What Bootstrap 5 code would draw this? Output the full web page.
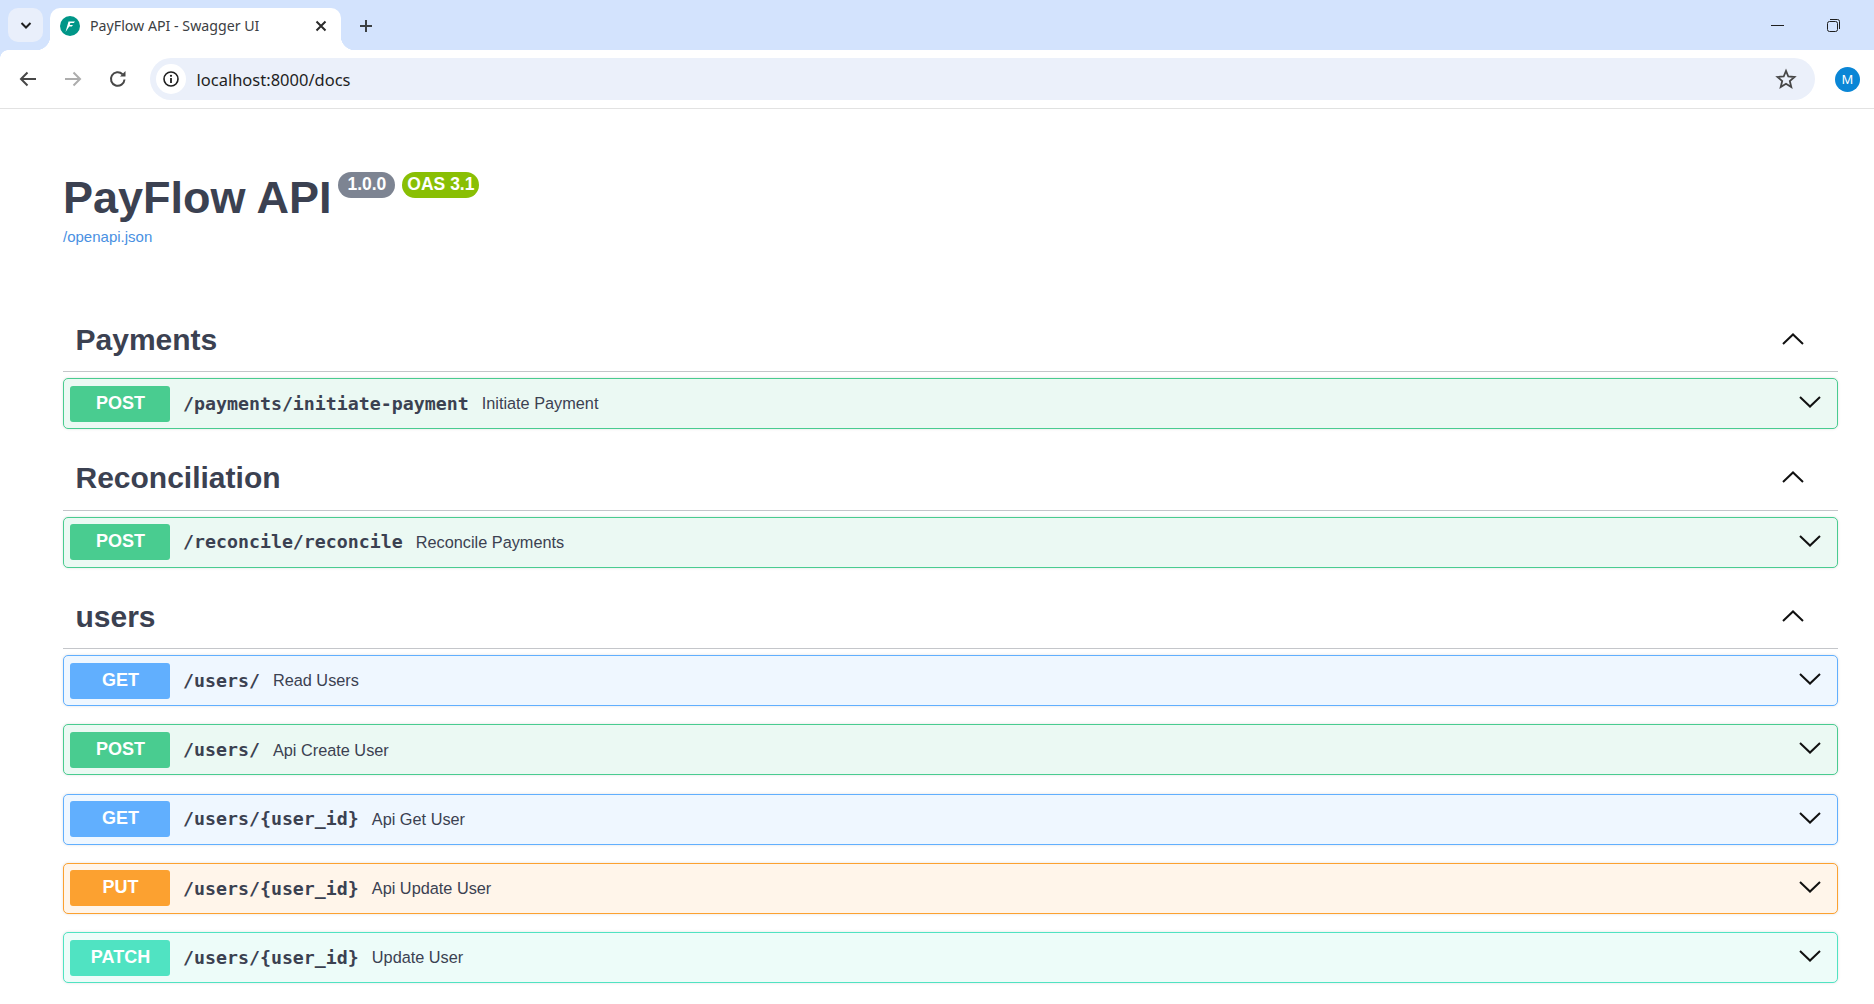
<!DOCTYPE html>
<html lang="en">
<head>
<meta charset="utf-8">
<title>PayFlow API - Swagger UI</title>
<link href="https://cdn.jsdelivr.net/npm/bootstrap@5.3.1/dist/css/bootstrap.min.css" rel="stylesheet">
<style>
    html, body { height: 100%; overflow: hidden; }
    body { background: #fff; font-family: "Liberation Sans", Arial, sans-serif; color: #3b4151; }

    /* browser chrome */
    .tab-strip { height: 50px; background: #d3e3fd; padding: 8px 0 0 8px; }
    .tab-toggle { width: 35px; height: 34px; background: #e9effb; border-radius: 10px; margin-right: 7px; }
    .tab-page { width: 291px; height: 42px; background: #fff; border-radius: 10px 10px 0 0; padding: 0 14px 7px 10px; position: relative; font: 14.2px "Noto Sans", sans-serif; color: #3c4043; }
    .tab-page::before, .tab-page::after { content: ""; position: absolute; bottom: 0; width: 14px; height: 14px; }
    .tab-page::before { left: -14px; background: radial-gradient(circle at 0 0, transparent 14px, #fff 14.5px); }
    .tab-page::after { right: -14px; background: radial-gradient(circle at 100% 0, transparent 14px, #fff 14.5px); }
    .fav-circle { width: 20px; height: 20px; flex: none; margin-right: 10px; }
    .tab-add { margin-left: 13px; margin-top: 5px; }
    .win-btns { margin-left: auto; gap: 43px; padding: 0 34px 8px 0; }
    .bar-tools { height: 58px; background: #fff; position: relative; padding: 8px 14px 8px 16px; }
    .bar-tools::before { content: ""; position: absolute; top: 0; left: 0; width: 8px; height: 8px; background: radial-gradient(circle at 100% 100%, transparent 7.5px, #d3e3fd 8px); }
    .bar-line { height: 1px; background: #e2e2e2; }
    .nav-ico { width: 24px; height: 24px; flex: none; margin-right: 21px; }
    .omni { height: 42px; flex: 1; background: #ebf0fa; border-radius: 21px; padding: 0 18px 0 6px; margin: 0 20px 0 -1px; font: 16.500px "Noto Sans", sans-serif; color: #1f1f1f; }
    .omni-info { width: 30px; height: 30px; background: #fff; border-radius: 50%; margin-right: 10.5px; }
    .avatar { width: 25px; height: 25px; background: #0a86d6; color: #fff; border-radius: 50%; font: 13px "Noto Sans", sans-serif; }

    /* swagger page */
    .sw-page { padding: 0 36px 0 63px; }
    .sw-info { padding-top: 66px; height: 208px; }
    .sw-title { font-size: 45px; font-weight: 700; line-height: 1; color: #3b4151; margin: 0; }
    .sw-title-row { gap: 7px; }
    .sw-pill { height: 26px; border-radius: 13px; color: #fff; font-size: 17.5px; font-weight: 700; line-height: 25px; padding: 0 9px; margin-top: -3px; background: #7d8492; }
    .sw-pill-oas { background: #89bf04; padding: 0 5px; }
    .sw-link { font-size: 15px; color: #4990e2; text-decoration: none; display: block; margin-top: 6px; }
    .sw-tag { height: 55px; border-bottom: 1px solid rgba(59,65,81,.3); padding: 0 34px 9px 12.5px; margin-bottom: 6px; }
    .sw-tag h3 { font-size: 30px; font-weight: 700; margin: 0; color: #3b4151; line-height: 1; }
    .sw-tag svg { margin-bottom: 2px; }
    .sw-op { height: 51px; border: 1px solid; border-radius: 5px; padding: 0 16px 0 6px; margin-bottom: 18.3px; box-shadow: 0 0 3px rgba(0,0,0,.12); }
    .sw-group { margin-bottom: 26.5px; }
    .sw-group .sw-op:last-child { margin-bottom: 0; }
    .sw-method { width: 100px; height: 36px; border-radius: 3px; color: #fff; font-size: 18px; font-weight: 700; margin-right: 13px; flex: none; padding: 0 0 1px 1px; }
    .sw-path { font-family: "DejaVu Sans Mono", monospace; font-size: 18.25px; font-weight: 700; color: #3b4151; margin-right: 13px; }
    .sw-desc { font-size: 16.3px; color: #3b4151; }
    .sw-chev { margin-left: auto; margin-bottom: 3px; flex: none; }
    .op-post { background: #ebf9f3; border-color: #49cc90; }
    .op-post .sw-method { background: #49cc90; }
    .op-get { background: #eff7ff; border-color: #61affe; }
    .op-get .sw-method { background: #61affe; }
    .op-put { background: #fff5ea; border-color: #fca130; }
    .op-put .sw-method { background: #fca130; }
    .op-patch { background: #edfcf9; border-color: #50e3c2; }
    .op-patch .sw-method { background: #50e3c2; }
</style>
</head>
<body>
    <div class="tab-strip d-flex align-items-start">
        <div class="tab-toggle d-flex align-items-center justify-content-center">
            <svg width="14" height="14" viewBox="0 0 14 14"><path d="M2.500 5 7 9.500 11.500 5" fill="none" stroke="#1f1f1f" stroke-width="2"/></svg>
        </div>
        <div class="tab-page d-flex align-items-center">
            <svg class="fav-circle" viewBox="0 0 20 20"><circle cx="10" cy="10" r="10" fill="#009688"/><path d="M5.500 16 8.500 5.500H15L13.800 7H10.300L9.800 9H13L11.800 10.500H9.300Z" fill="#fff"/></svg>
            <span>PayFlow API - Swagger UI</span>
            <svg class="ms-auto" width="12" height="12" viewBox="0 0 12 12"><path d="M1.500 1.500 10.500 10.500M10.500 1.500 1.500 10.500" stroke="#2b2b2b" stroke-width="2"/></svg>
        </div>
        <svg class="tab-add" width="24" height="26" viewBox="0 0 24 26"><path d="M12 7V19M6 13H18" stroke="#3c4043" stroke-width="2"/></svg>
        <div class="win-btns d-flex align-items-center h-100">
            <svg width="13" height="13" viewBox="0 0 13 13"><path d="M0 6.500H13" stroke="#1f1f1f" stroke-width="1"/></svg>
            <svg width="13" height="13" viewBox="0 0 13 13"><rect x=".5" y="2.500" width="10" height="10" rx="2" fill="none" stroke="#1f1f1f"/><path d="M3 .5H10.500A2 2 0 0 1 12.500 2.500V10" fill="none" stroke="#1f1f1f"/></svg>
        </div>
    </div>
    <div class="bar-tools d-flex align-items-center">
        <svg class="nav-ico" viewBox="0 0 24 24"><path d="M20 12H5M11.500 5.500 5 12l6.500 6.500" fill="none" stroke="#474747" stroke-width="2"/></svg>
        <svg class="nav-ico" viewBox="0 0 24 24"><path d="M4 12H19M12.500 5.500 19 12l-6.500 6.500" fill="none" stroke="#adadad" stroke-width="2"/></svg>
        <svg class="nav-ico" viewBox="0 0 24 24"><path d="M18.500 12.500A6.800 6.800 0 1 1 16.500 7.200" fill="none" stroke="#474747" stroke-width="2"/><path d="M19.500 4V9.500H14Z" fill="#474747"/></svg>
        <div class="omni d-flex align-items-center">
            <div class="omni-info d-flex align-items-center justify-content-center">
                <svg width="16" height="16" viewBox="0 0 16 16"><circle cx="8" cy="8" r="7" fill="none" stroke="#1f1f1f" stroke-width="1.600"/><path d="M8 7V12" stroke="#1f1f1f" stroke-width="1.800"/><circle cx="8" cy="4.800" r="1.100" fill="#1f1f1f"/></svg>
            </div>
            <span>localhost:8000/docs</span>
            <svg class="ms-auto" width="22" height="22" viewBox="0 0 22 22"><path d="M11 2.800 13.300 8.500 19.500 9 14.800 13 16.300 19 11 15.800 5.700 19 7.200 13 2.500 9 8.700 8.500Z" fill="none" stroke="#474747" stroke-width="1.800"/></svg>
        </div>
        <div class="avatar d-flex align-items-center justify-content-center">M</div>
    </div>
    <div class="bar-line"></div>

    <div class="sw-page">
        <div class="sw-info">
            <div class="sw-title-row d-flex align-items-start">
                <h1 class="sw-title">PayFlow API</h1>
                <span class="sw-pill">1.0.0</span>
                <span class="sw-pill sw-pill-oas">OAS 3.1</span>
            </div>
            <a class="sw-link" href="#">/openapi.json</a>
        </div>
        <div id="groups"></div>
    </div>

    <template id="group-template">
        <div class="sw-group">
            <div class="sw-tag d-flex align-items-center justify-content-between">
                <h3></h3>
                <svg width="22" height="12" viewBox="0 0 22 12"><path d="M1 11 11 1.500 21 11" fill="none" stroke="#111" stroke-width="2"/></svg>
            </div>
            <div class="op-list"></div>
        </div>
    </template>
    <template id="op-template">
        <div class="sw-op d-flex align-items-center">
            <span class="sw-method d-flex align-items-center justify-content-center"></span>
            <span class="sw-path"></span>
            <span class="sw-desc"></span>
            <svg class="sw-chev" width="22" height="12" viewBox="0 0 22 12"><path d="M1 1 11 10.500 21 1" fill="none" stroke="#111" stroke-width="2"/></svg>
        </div>
    </template>

    <script>
        const groups = [
            { name: 'Payments', ops: [
                { method: 'POST', path: '/payments/initiate-payment', desc: 'Initiate Payment' }
            ]},
            { name: 'Reconciliation', ops: [
                { method: 'POST', path: '/reconcile/reconcile', desc: 'Reconcile Payments' }
            ]},
            { name: 'users', ops: [
                { method: 'GET', path: '/users/', desc: 'Read Users' },
                { method: 'POST', path: '/users/', desc: 'Api Create User' },
                { method: 'GET', path: '/users/{user_id}', desc: 'Api Get User' },
                { method: 'PUT', path: '/users/{user_id}', desc: 'Api Update User' },
                { method: 'PATCH', path: '/users/{user_id}', desc: 'Update User' }
            ]}
        ];

        const holder = document.getElementById('groups');
        groups.forEach(group => {
            const g = document.getElementById('group-template').content.cloneNode(true);
            g.querySelector('h3').innerText = group.name;
            group.ops.forEach(op => {
                const row = document.getElementById('op-template').content.cloneNode(true);
                row.querySelector('.sw-op').classList.add('op-' + op.method.toLowerCase());
                row.querySelector('.sw-method').innerText = op.method;
                row.querySelector('.sw-path').innerText = op.path;
                row.querySelector('.sw-desc').innerText = op.desc;
                g.querySelector('.op-list').appendChild(row);
            });
            holder.appendChild(g);
        });
    </script>
    <script src="https://cdn.jsdelivr.net/npm/bootstrap@5.3.1/dist/js/bootstrap.bundle.min.js"></script>
</body>
</html>
